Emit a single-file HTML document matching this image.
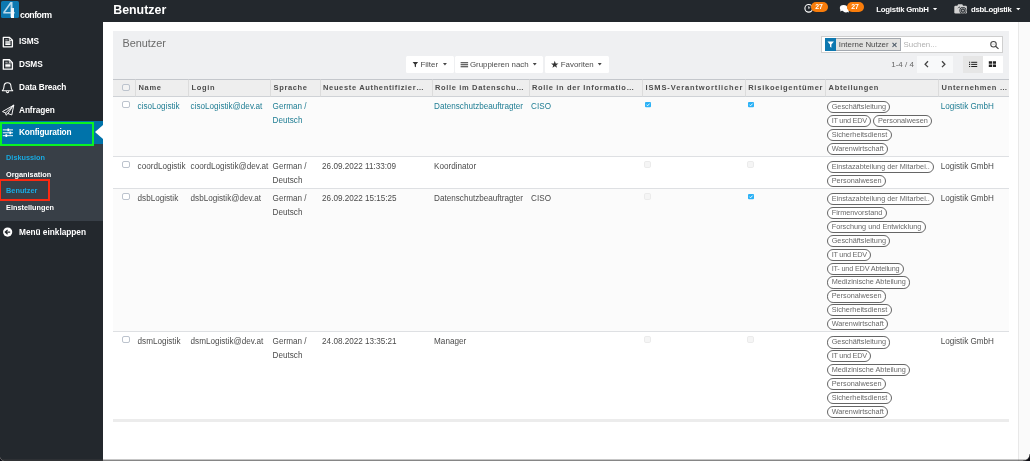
<!DOCTYPE html>
<html lang="de">
<head>
<meta charset="utf-8">
<title>Benutzer</title>
<style>
*{box-sizing:border-box;margin:0;padding:0}
html,body{width:1030px;height:461px;overflow:hidden;background:#fff;font-family:"Liberation Sans",sans-serif;}
body{position:relative;color:#4c4c4c;will-change:transform}
.abs{position:absolute}
svg{display:block;overflow:visible}
#side{position:absolute;left:0;top:0;width:103px;height:461px;background:#23282d}
#top{position:absolute;left:103px;top:0;width:927px;height:22px;background:#23282d}
#top .title{position:absolute;left:10.2px;top:.6px;font-size:12.4px;font-weight:bold;color:#fff;line-height:19px}
.tb{position:absolute;top:4px;font-size:7.8px;font-weight:bold;color:#fff;line-height:12px;letter-spacing:-.22px;white-space:nowrap}
.bdg{position:absolute;top:1.9px;width:17.2px;height:10.3px;border-radius:5.2px;background:#f97d0b;color:#fff;font-size:6.9px;font-weight:bold;line-height:9.4px;text-align:center;padding-right:1px}
.mi{position:absolute;z-index:2;left:19px;color:#fff;font-weight:bold;font-size:8.3px;line-height:12px;white-space:nowrap;letter-spacing:-.1px}
#sub{position:absolute;left:0;top:144.1px;width:103px;height:76.7px;background:#383f47}
.si{position:absolute;left:6.1px;font-size:7.3px;font-weight:bold;color:#fff;line-height:10px;white-space:nowrap}
.si.b{color:#18aae2}
#scroll{position:absolute;left:1018px;top:22px;width:12px;height:439px;background:#fafafa;border-left:1px solid #e8e8e8}
#cp{position:absolute;left:113px;top:31px;width:896px;height:48px;background:#eff0f2}
#cp h2{position:absolute;left:9.4px;top:5px;font-size:10.9px;font-weight:normal;color:#6b6b6b;line-height:14px}
.btn{position:absolute;top:24.6px;height:17.2px;background:#fff;border-radius:1.5px;font-size:7.9px;line-height:17px;color:#4c4c4c;white-space:nowrap}
.btn span{position:absolute;top:0}
table{position:absolute;left:113px;top:78.7px;width:896px;border-collapse:separate;border-spacing:0;table-layout:fixed;font-size:8.15px}
th{height:18.2px;background:#eee;border-top:1px solid #c4c7cc;border-bottom:1px solid #cfd2d6;border-left:1px solid #dcdcdc;text-align:left;font-size:7.5px;letter-spacing:.65px;color:#4c4c4c;padding:.5px 0 0 2.5px;white-space:nowrap;overflow:hidden;font-weight:bold;line-height:15.7px}
th:first-child{border-left:none}
td{vertical-align:top;padding:2.9px 0 0 2.6px;line-height:14.4px;border-bottom:1px solid #dee0e3;white-space:nowrap;color:#4c4c4c;background:#fff;overflow:visible}
tr:nth-child(even) td{background:#fbfbfb}
tr:last-child td{border-bottom:none}
tr.l td{color:#1f7d93}
td.t{padding:2.6px 0 .8px 2.1px;line-height:0;font-size:0}
.lg{height:20px}
.cb{position:relative;display:block;width:7.4px;height:6.6px;border:1px solid #bcc3cd;border-radius:2px;background:#fff;margin:1.5px 0 0 6.6px}
.cc{display:block;width:7px;height:6.4px;border:1px solid #ebebeb;border-radius:1.8px;background:#f5f5f5;margin:1.5px 0 0 -.3px}
.ck{display:block;margin:2.2px 0 0 .3px}
.tag{display:inline-block;height:12.2px;border:1px solid #666;border-radius:6.1px;font-size:7.3px;line-height:10.1px;padding:0 3.4px 0 3.5px;color:#6a6a6a;margin:1.7px 2.2px 0 0;vertical-align:top;background:#fff}
</style>
</head>
<body>
<div id="side">
  <div class="abs" style="left:.6px;top:1.2px;width:18.3px;height:16.6px;background:#0d78b0;border-radius:1.6px;overflow:hidden"><div class="abs" style="left:2.2px;top:-3.3px;font-size:22.6px;line-height:24px;color:#b9d9eb;font-weight:normal">4</div><div class="abs" style="left:10.6px;top:7.2px;width:3px;height:9.4px;background:linear-gradient(#e6f1f8,#fff)"></div></div>
  
  <div class="abs" style="left:20px;top:10.3px;font-size:8.8px;font-weight:bold;color:#fff;line-height:10px;letter-spacing:-.5px">conform</div>


  <svg class="abs" style="left:0;top:0;z-index:2" width="103" height="461" viewBox="0 0 103 461" fill="none" stroke="#fff" stroke-linejoin="round" stroke-linecap="round">
    <g id="doc1" stroke-width="1.3"><path d="M3.3 37.4h6.2l2.9 2.9v6.5H3.3z"/><path d="M9.3 37.6v2.9h2.9" stroke-width=".8"/><path d="M5.3 41.8h5.2M5.3 43.1h5.2M5.3 44.4h5.2" stroke-width="1.05" stroke-linecap="butt"/><path d="M5.3 39.9h2.4" stroke-width=".7" stroke-linecap="butt"/></g>
    <g stroke-width="1.3" transform="translate(0 22.35)"><path d="M3.3 37.4h6.2l2.9 2.9v6.5H3.3z"/><path d="M9.3 37.6v2.9h2.9" stroke-width=".8"/><path d="M5.3 41.8h5.2M5.3 43.1h5.2M5.3 44.4h5.2" stroke-width="1.05" stroke-linecap="butt"/><path d="M5.3 39.9h2.4" stroke-width=".7" stroke-linecap="butt"/></g>
    <g stroke-width="1.05"><path d="M7.5 82.7c-2.3 0-3.5 1.7-3.5 3.9 0 2.1-.6 3.2-1.7 4.1h10.4c-1.1-.9-1.7-2-1.7-4.1 0-2.2-1.2-3.9-3.5-3.9z"/><path d="M6.3 91.4a1.2 1.2 0 0 0 2.4 0" /></g>
    <g stroke-width=".95"><path d="M13.5 105.3L2.5 111.6l3.2 1.3.4 2.3 1.8-1.7 3.5 1.3z"/><path d="M13.5 105.3L5.7 112.9M13.5 105.3L7.9 113.5"/></g>
    <g stroke-width="1" stroke-linecap="butt"><path d="M2.8 129.9H13M2.8 132.8H13M2.8 135.7H13"/><path d="M8.3 128.5v2.8M10.3 131.4v2.8M6.3 134.3v2.8" stroke-width="1.7"/></g>
    <circle cx="7.65" cy="232.1" r="4.6" fill="#fff" stroke="none"/>
    <path d="M10.2 232.1H5.6M7.6 229.9l-2.3 2.2 2.3 2.2" stroke="#23282d" stroke-width="1.25" stroke-linecap="butt" stroke-linejoin="miter"/>
  </svg>
  <div class="mi" style="top:35.4px">ISMS</div>
  <div class="mi" style="top:58.1px">DSMS</div>
  <div class="mi" style="top:80.6px">Data Breach</div>
  <div class="mi" style="top:103.6px">Anfragen</div>

  <div class="abs" style="left:0;top:121.2px;width:103px;height:22.9px;background:#0073aa"></div>
  <div class="abs" style="left:0;top:121.8px;width:94px;height:24.1px;border:2px solid #0af224;z-index:3"></div>
  <div class="abs" style="left:94.6px;top:124.7px;width:0;height:0;border-top:7.8px solid transparent;border-bottom:7.8px solid transparent;border-right:8.4px solid #fff"></div>
  <div class="mi" style="top:126px;letter-spacing:-.15px">Konfiguration</div>

  <div id="sub">
    <div class="si b" style="top:9.3px">Diskussion</div>
    <div class="si" style="top:25.8px">Organisation</div>
    <div class="si b" style="top:42px">Benutzer</div>
    <div class="si" style="top:58.6px">Einstellungen</div>
    <div class="abs" style="left:-1px;top:35.3px;width:51.1px;height:21.3px;border:2px solid #fb2a12"></div>
  </div>
  <div class="mi" style="top:225.8px;letter-spacing:-.02px">Menü einklappen</div>
</div>

<div id="top">
  <div class="title">Benutzer</div>
  <svg class="abs" style="left:0;top:0" width="927" height="22" viewBox="103 0 927 22" fill="none">
    <path d="M932.9 8.0h4.30l-2.15 2.3z" fill="#fff"/><path d="M1016.1 8.0h4.30l-2.15 2.3z" fill="#fff"/>
    <circle cx="808.7" cy="8.3" r="3.8" stroke="#fff" stroke-width="1.1"/><path d="M808.7 6.3v2.2l1.6-1.3" stroke="#fff" stroke-width=".8"/>
    <ellipse cx="843.6" cy="8" rx="3.8" ry="2.9" fill="#fff"/><path d="M840.6 9.5l-.5 2 2.2-1z" fill="#fff"/><ellipse cx="845.9" cy="10.3" rx="2.9" ry="2.1" fill="#fff"/><path d="M847.2 11.5l1.6 1.3-.3-2z" fill="#fff"/>
    <rect x="954.3" y="5.8" width="12.6" height="7.6" rx="1.2" fill="#d2d2d2"/><path d="M957.3 6l.8-1.8h4.2l.8 1.8z" fill="#d2d2d2"/>
    <circle cx="962.9" cy="10.6" r="3.5" fill="#23282d"/><circle cx="962.9" cy="10.6" r="2.55" fill="none" stroke="#d8d8d8" stroke-width=".65"/><path d="M961.7 10.6h2.4M962.9 9.4v2.4" stroke="#d8d8d8" stroke-width=".6"/>
    <path d="M958 8.2a2.4 2.4 0 0 1 2-1.2" stroke="#23282d" stroke-width=".8"/>
  </svg>
  <div class="bdg" style="left:707.9px">27</div>
  <div class="bdg" style="left:743.9px">27</div>
  <div class="tb" style="left:773.2px">Logistik GmbH</div>
  <div class="tb" style="left:868px;letter-spacing:-.3px">dsbLogistik</div>
</div>
<div id="scroll"></div>

<div id="cp">
  <h2>Benutzer</h2>
  <div class="btn" style="left:293px;width:47.6px"><span style="left:14.5px">Filter</span></div>
  <div class="btn" style="left:342.1px;width:88.4px"><span style="left:14.8px">Gruppieren nach</span></div>
  <div class="btn" style="left:432px;width:63.7px"><span style="left:15.8px">Favoriten</span></div>

  <div class="abs" style="left:708.1px;top:5px;width:181.8px;height:16.7px;background:#fff;border:1px solid #cfcfcf"></div>
  <div class="abs" style="left:712.2px;top:7.4px;width:10.8px;height:12.2px;background:#0d78b0"></div>
  <div class="abs" style="left:723px;top:7.4px;width:65.2px;height:12.2px;background:#e2e2e0;border:1px solid #a4a9b0;border-left:none"></div>
  <div class="abs" style="left:725.8px;top:9.4px;font-size:7.86px;line-height:10px;color:#484848;white-space:nowrap">Interne Nutzer</div>
  <div class="abs" style="left:778.8px;top:8.9px;font-size:9.4px;line-height:10px;color:#4a5866;font-weight:bold">×</div>
  <div class="abs" style="left:790.5px;top:9.2px;font-size:7.9px;line-height:10px;color:#b0b0b0;white-space:nowrap">Suchen...</div>

  <div class="abs" style="left:778.2px;top:29.4px;font-size:8px;line-height:10px;color:#666;white-space:nowrap">1-4 / 4</div>
  <div class="abs" style="left:804.2px;top:24.6px;width:17.8px;height:17px;background:#f8f9fa"></div>
  <div class="abs" style="left:822px;top:24.6px;width:17.7px;height:17px;background:#f8f9fa"></div>
  <div class="abs" style="left:849.7px;top:24.6px;width:20.3px;height:17px;background:#e6e6e6"></div>
  <div class="abs" style="left:870px;top:24.6px;width:20px;height:17px;background:#fff"></div>

  <svg class="abs" style="left:0;top:0" width="896" height="48" viewBox="113 31 896 48" fill="none">
    <path d="M443 63.1h3.90l-1.95 2.3z" fill="#444"/><path d="M532.8 63.1h3.90l-1.95 2.3z" fill="#444"/><path d="M597.8 63.1h3.90l-1.95 2.3z" fill="#444"/>
    <path d="M412.6 62h5.5l-2.1 2.5v2.7l-1.3-.8v-1.9z" fill="#333"/>
    <path d="M460.6 62.7h7.5M460.6 64.7h7.5M460.6 66.7h7.5" stroke="#333" stroke-width="1.1"/>
    <polygon points="554.75,60.80 555.69,63.41 558.46,63.49 556.27,65.19 557.04,67.86 554.75,66.30 552.46,67.86 553.23,65.19 551.04,63.49 553.81,63.41" fill="#333"/>
    <path d="M827.5 41.5h6.4l-2.5 2.9v3.3l-1.4-1v-2.3z" fill="#fff"/>
    <circle cx="993.5" cy="44.2" r="2.75" stroke="#444" stroke-width="1.05"/><path d="M995.6 46.3l2.9 2.6" stroke="#444" stroke-width="1.2"/><path d="M992.2 44.2h2.6" stroke="#999" stroke-width=".5"/>
    <path d="M928 61.3l-2.9 2.9 2.9 2.9" stroke="#444" stroke-width="1.3"/>
    <path d="M942 61.3l2.9 2.9-2.9 2.9" stroke="#444" stroke-width="1.3"/>
    <path d="M971.2 62.3h6M971.2 64.4h6M971.2 66.5h6" stroke="#222" stroke-width="1"/>
    <path d="M969 62.3h1.2M969 64.4h1.2M969 66.5h1.2" stroke="#222" stroke-width="1.1"/>
    <path d="M988.8 61.2h3.2v2.5h-3.2zM992.8 61.2h3.2v2.5h-3.2zM988.8 64.5h3.2v2.5h-3.2zM992.8 64.5h3.2v2.5h-3.2z" fill="#222"/>
  </svg>
</div>

<table>
<colgroup><col style="width:22px"><col style="width:53px"><col style="width:82px"><col style="width:49.5px"><col style="width:112px"><col style="width:97px"><col style="width:113.5px"><col style="width:102.7px"><col style="width:80.4px"><col style="width:113px"><col></colgroup>
<tr><th><i class="cb" style="top:-.4px;margin:0 0 0 6.9px;background:#f3f3f3;width:7.6px;height:6.4px"></i></th><th>Name</th><th>Login</th><th>Sprache</th><th>Neueste Authentifizier…</th><th>Rolle im Datenschu…</th><th>Rolle in der Informatio…</th><th style="letter-spacing:.87px">ISMS-Verantwortlicher</th><th style="letter-spacing:.76px">Risikoeigentümer</th><th>Abteilungen</th><th>Unternehmen …</th></tr>
<tr class="l"><td><i class="cb"></i></td><td>cisoLogistik</td><td>cisoLogistik@dev.at</td><td><div class="lg">German /<br>Deutsch</div></td><td></td><td>Datenschutzbeauftragter</td><td>CISO</td><td><svg class="ck" width="6" height="5.3" viewBox="0 0 6 5.3"><rect width="6" height="5.3" rx="1" fill="#2ab1f6"/><path d="M1.5 2.7l1.1 1.1 2-2.2" stroke="#fff" stroke-width=".9" fill="none"/></svg></td><td><svg class="ck" width="6" height="5.3" viewBox="0 0 6 5.3"><rect width="6" height="5.3" rx="1" fill="#2ab1f6"/><path d="M1.5 2.7l1.1 1.1 2-2.2" stroke="#fff" stroke-width=".9" fill="none"/></svg></td><td class="t"><span class="tag">Geschäftsleitung</span><br><span class="tag" style="letter-spacing:-.24px">IT und EDV</span><span class="tag">Personalwesen</span><br><span class="tag">Sicherheitsdienst</span><br><span class="tag">Warenwirtschaft</span></td><td>Logistik GmbH</td></tr>
<tr><td><i class="cb"></i></td><td>coordLogistik</td><td>coordLogistik@dev.at</td><td><div class="lg">German /<br>Deutsch</div></td><td>26.09.2022 11:33:09</td><td>Koordinator</td><td></td><td><i class="cc"></i></td><td><i class="cc"></i></td><td class="t"><span class="tag">Einstazabteilung der Mitarbei..</span><br><span class="tag">Personalwesen</span></td><td>Logistik GmbH</td></tr>
<tr><td><i class="cb"></i></td><td>dsbLogistik</td><td>dsbLogistik@dev.at</td><td><div class="lg">German /<br>Deutsch</div></td><td>26.09.2022 15:15:25</td><td>Datenschutzbeauftragter</td><td>CISO</td><td><i class="cc"></i></td><td><svg class="ck" width="6" height="5.3" viewBox="0 0 6 5.3"><rect width="6" height="5.3" rx="1" fill="#2ab1f6"/><path d="M1.5 2.7l1.1 1.1 2-2.2" stroke="#fff" stroke-width=".9" fill="none"/></svg></td><td class="t"><span class="tag">Einstazabteilung der Mitarbei..</span><br><span class="tag">Firmenvorstand</span><br><span class="tag">Forschung und Entwicklung</span><br><span class="tag">Geschäftsleitung</span><br><span class="tag" style="letter-spacing:-.24px">IT und EDV</span><br><span class="tag" style="letter-spacing:-.19px">IT- und EDV Abteilung</span><br><span class="tag">Medizinische Abteilung</span><br><span class="tag">Personalwesen</span><br><span class="tag">Sicherheitsdienst</span><br><span class="tag">Warenwirtschaft</span></td><td>Logistik GmbH</td></tr>
<tr><td><i class="cb"></i></td><td>dsmLogistik</td><td>dsmLogistik@dev.at</td><td><div class="lg">German /<br>Deutsch</div></td><td>24.08.2022 13:35:21</td><td>Manager</td><td></td><td><i class="cc"></i></td><td><i class="cc"></i></td><td class="t"><span class="tag">Geschäftsleitung</span><br><span class="tag" style="letter-spacing:-.24px">IT und EDV</span><br><span class="tag">Medizinische Abteilung</span><br><span class="tag">Personalwesen</span><br><span class="tag">Sicherheitsdienst</span><br><span class="tag">Warenwirtschaft</span></td><td>Logistik GmbH</td></tr>
</table>
<div class="abs" style="left:113px;top:419px;width:896px;height:3px;background:#ececec"></div>
<div class="abs" style="left:0;top:459px;width:1030px;height:1px;background:rgba(70,70,70,.3);z-index:5"></div>
<div class="abs" style="left:0;top:460px;width:1030px;height:1px;background:rgba(60,60,60,.62);z-index:5"></div>
<div class="abs" style="left:1023px;top:454px;width:7px;height:7px;background:radial-gradient(circle at 0 0,rgba(0,0,0,0) 6.2px,#3a3a3a 6.8px,#0b0b14 7.6px);z-index:6"></div>
<div class="abs" style="left:0;top:456px;width:5px;height:5px;background:radial-gradient(circle at 100% 0,rgba(0,0,0,0) 4.6px,#666 5px,#0b0b14 5.8px);z-index:6"></div>
</body>
</html>
